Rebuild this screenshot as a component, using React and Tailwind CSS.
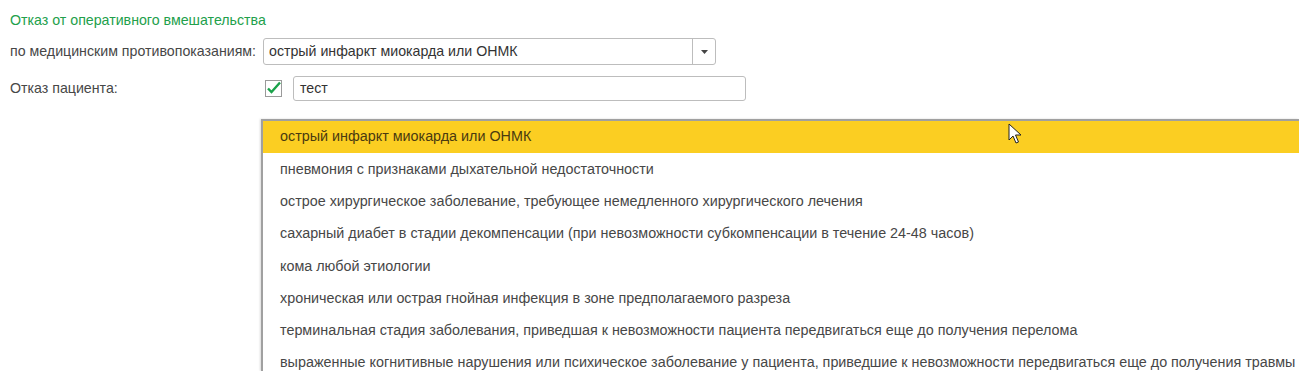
import React from "react";

const items = [
  "острый инфаркт миокарда или ОНМК",
  "пневмония с признаками дыхательной недостаточности",
  "острое хирургическое заболевание, требующее немедленного хирургического лечения",
  "сахарный диабет в стадии декомпенсации (при невозможности субкомпенсации в течение 24-48 часов)",
  "кома любой этиологии",
  "хроническая или острая гнойная инфекция в зоне предполагаемого разреза",
  "терминальная стадия заболевания, приведшая к невозможности пациента передвигаться еще до получения перелома",
  "выраженные когнитивные нарушения или психическое заболевание у пациента, приведшие к невозможности передвигаться еще до получения травмы",
];

export default function App() {
  return (
    <div
      className="relative w-[1299px] h-[371px] overflow-hidden bg-white text-[14.2px] text-[#474747]"
      style={{ fontFamily: '"Liberation Sans", Arial, sans-serif' }}
    >
      <div className="pl-[10px] pt-[12px]">
        <div className="text-[#22a04b] leading-[16px] h-[22px]">Отказ от оперативного вмешательства</div>
        <div className="flex items-center h-[27px] mt-[4px]">
          <span className="w-[253px] whitespace-nowrap">по медицинским противопоказаниям:</span>
          <div className="flex h-[27px] w-[453px] border border-[#bdbdbd] rounded-[3px] bg-white">
            <div className="flex-1 flex items-center pl-[5px] text-[#333]">острый инфаркт миокарда или ОНМК</div>
            <div className="w-[23px] border-l border-[#bdbdbd] flex items-center justify-center">
              <svg width="7" height="4" viewBox="0 0 7 4"><path d="M0 0h7L3.5 4z" fill="#444" /></svg>
            </div>
          </div>
        </div>
        <div className="flex items-center h-[25px] mt-[11px]">
          <span className="w-[255px] whitespace-nowrap">Отказ пациента:</span>
          <div className="w-[17px] h-[17px] border border-[#9a9a9a] bg-white relative flex items-center justify-center">
            <svg width="16" height="14" viewBox="0 0 16 14" className="absolute left-[0px] top-[0px]">
              <path d="M2 7.5l3.5 3.5L14 1.5" fill="none" stroke="#1aa24a" strokeWidth="2.4" />
            </svg>
          </div>
          <div className="ml-[11px] h-[25px] w-[453px] border border-[#bdbdbd] rounded-[3px] flex items-center pl-[6px] text-[#333]">тест</div>
        </div>
      </div>

      <div className="absolute left-[261px] top-[119px] right-0 bottom-0 border-l-2 border-t-2 border-[#a0a0a0] bg-white shadow-[-1px_0_2px_rgba(0,0,0,0.15)] text-[14.35px]">
        {items.map((t, i) => (
          <div
            key={i}
            className={
              "h-[32.3px] flex items-center pl-[17px] whitespace-nowrap " +
              (i === 0 ? "bg-[#fbce22] text-[#4a3a10]" : "")
            }
          >
            {t}
          </div>
        ))}
      </div>

      <svg className="absolute left-[1008px] top-[123px]" width="14" height="22" viewBox="0 0 14 22">
        <path d="M1 1v16l4-4 3 7 2.5-1-3-7h5.5z" fill="#fff" stroke="#222" strokeWidth="1" strokeLinejoin="round" />
      </svg>
    </div>
  );
}
